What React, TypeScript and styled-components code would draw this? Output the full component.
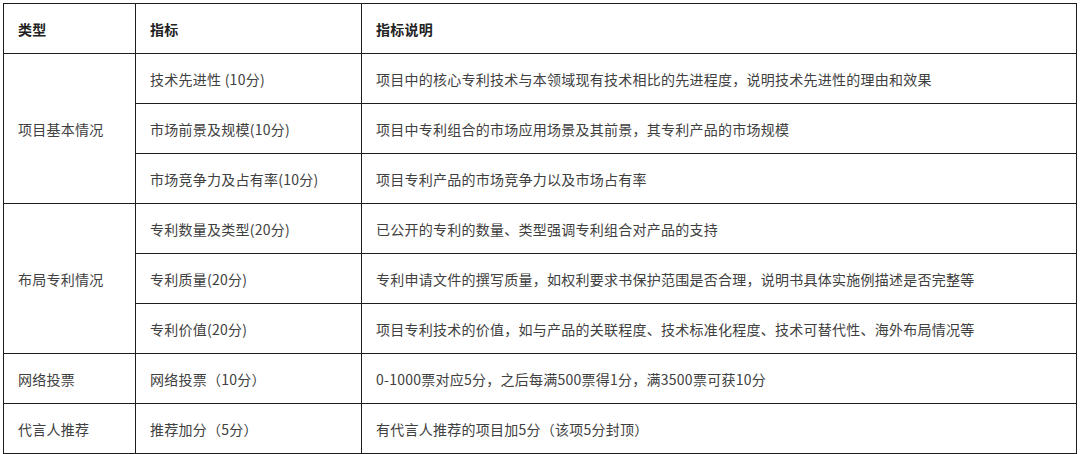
import React from "react";
import styled, { createGlobalStyle } from "styled-components";

const Global = createGlobalStyle`
  html, body { margin: 0; padding: 0; background: #fff; }
  body { font-family: "Noto Sans CJK SC", "Noto Sans", sans-serif; }
`;

const Wrap = styled.div`
  padding: 3px 0 0 3px;
`;

const Table = styled.table`
  border-collapse: collapse;
  table-layout: fixed;
  width: 1073px;
  border: 1px solid #1e1e1e;
`;

const Col = styled.col<{ $w: number }>`
  width: ${(p) => p.$w}px;
`;

const Th = styled.th`
  height: 49px;
  padding: 0 0 0 14px;
  text-align: left;
  font-size: 14px;
  letter-spacing: 0.25px;
  font-weight: 700;
  color: #222;
  border: 1px solid #1e1e1e;
  vertical-align: middle;
`;

const Td = styled.td<{ $soft?: boolean }>`
  height: 49px;
  padding: 0 0 0 14px;
  font-size: 14px;
  letter-spacing: 0.25px;
  font-weight: 400;
  color: #404040;
  border: 1px solid #1e1e1e;
  border-top-color: ${(p) => (p.$soft ? "#6a6a6a" : "#1e1e1e")};
  vertical-align: middle;
  white-space: nowrap;
`;

type Row = { type?: string; span?: number; name: string; desc: string; soft?: boolean };

const rows: Row[] = [
  { type: "项目基本情况", span: 3, name: "技术先进性 (10分)", desc: "项目中的核心专利技术与本领域现有技术相比的先进程度，说明技术先进性的理由和效果", soft: true },
  { name: "市场前景及规模(10分)", desc: "项目中专利组合的市场应用场景及其前景，其专利产品的市场规模", soft: true },
  { name: "市场竞争力及占有率(10分)", desc: "项目专利产品的市场竞争力以及市场占有率" },
  { type: "布局专利情况", span: 3, name: "专利数量及类型(20分)", desc: "已公开的专利的数量、类型强调专利组合对产品的支持" },
  { name: "专利质量(20分)", desc: "专利申请文件的撰写质量，如权利要求书保护范围是否合理，说明书具体实施例描述是否完整等" },
  { name: "专利价值(20分)", desc: "项目专利技术的价值，如与产品的关联程度、技术标准化程度、技术可替代性、海外布局情况等" },
  { type: "网络投票", span: 1, name: "网络投票（10分）", desc: "0-1000票对应5分，之后每满500票得1分，满3500票可获10分", soft: true },
  { type: "代言人推荐", span: 1, name: "推荐加分（5分）", desc: "有代言人推荐的项目加5分（该项5分封顶）", soft: true },
];

export default function App() {
  return (
    <>
      <Global />
      <Wrap>
        <Table>
          <colgroup>
            <Col $w={132} />
            <Col $w={226} />
            <Col $w={715} />
          </colgroup>
          <thead>
            <tr>
              <Th>类型</Th>
              <Th>指标</Th>
              <Th>指标说明</Th>
            </tr>
          </thead>
          <tbody>
            {rows.map((r, i) => (
              <tr key={i}>
                {r.type && <Td rowSpan={r.span}>{r.type}</Td>}
                <Td>{r.name}</Td>
                <Td $soft={r.soft}>{r.desc}</Td>
              </tr>
            ))}
          </tbody>
        </Table>
      </Wrap>
    </>
  );
}
